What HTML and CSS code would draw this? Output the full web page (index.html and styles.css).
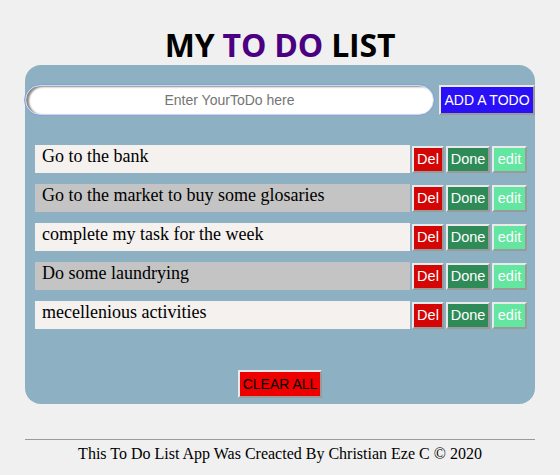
FILE: index.html
```html
<!DOCTYPE html>
<html>
<head>
<meta charset="utf-8">
<link rel="stylesheet" href="styles.css">
</head>
<body>
<h1 class="title">MY <span class="accent">TO DO</span> LIST</h1>
<main class="card">
  <form class="add-row">
    <input class="todo-input" type="text" placeholder="Enter YourToDo here">
    <button class="btn btn-add" type="button">ADD A TODO</button>
  </form>
  <ul class="list">
    <li class="item light"><span class="item-text">Go to the bank</span><button class="btn btn-del">Del</button><button class="btn btn-done">Done</button><button class="btn btn-edit">edit</button></li>
    <li class="item grey"><span class="item-text">Go to the market to buy some glosaries</span><button class="btn btn-del">Del</button><button class="btn btn-done">Done</button><button class="btn btn-edit">edit</button></li>
    <li class="item light"><span class="item-text">complete my task for the week</span><button class="btn btn-del">Del</button><button class="btn btn-done">Done</button><button class="btn btn-edit">edit</button></li>
    <li class="item grey"><span class="item-text">Do some laundrying</span><button class="btn btn-del">Del</button><button class="btn btn-done">Done</button><button class="btn btn-edit">edit</button></li>
    <li class="item light"><span class="item-text">mecellenious activities</span><button class="btn btn-del">Del</button><button class="btn btn-done">Done</button><button class="btn btn-edit">edit</button></li>
  </ul>
  <div class="clear-row"><button class="btn btn-clear">CLEAR ALL</button></div>
</main>
<footer class="footer">
  <hr class="rule">
  <p class="credit">This To Do List App Was Creacted By Christian Eze C © 2020</p>
</footer>
</body>
</html>
```
FILE: styles.css
```css
html, body { margin: 0; padding: 0; }
body {
  background: #f0f0f0;
  font-family: "Liberation Serif", serif;
  width: 560px;
  height: 475px;
  overflow: hidden;
}
.title {
  margin: 24px 0 0;
  height: 41px;
  text-align: center;
  font-family: "Open Sans", "Noto Sans", sans-serif;
  font-weight: 700;
  font-size: 32px;
  line-height: 41px;
  color: #000;
  letter-spacing: -0.2px;
}
.accent { color: #4b0082; }
.card {
  box-sizing: border-box;
  width: 510px;
  height: 339px;
  margin: 0 25px;
  background: #8eb0c3;
  border-radius: 16px;
  padding: 20px 0 0;
}
.add-row {
  display: flex;
  margin: 0;
  gap: 5px;
  height: 30px;
}
.todo-input {
  box-sizing: border-box;
  width: 409px;
  height: 30px;
  margin: 0;
  border: 1px solid #d8d8d8;
  border-radius: 15px;
  background: #fff;
  box-shadow: inset 3px 1px 2px #8a8a8a;
  outline: 1px solid #7fa4e6;
  outline-offset: 0;
  font-family: "Liberation Sans", Arial, sans-serif;
  font-size: 14px;
  text-align: center;
  padding: 0 10px;
}
.todo-input::placeholder { color: #757575; }
.btn {
  box-sizing: border-box;
  margin: 0;
  border: 2px solid #eaeaea;
  border-right-color: #9a9a9a;
  border-bottom-color: #9a9a9a;
  font-family: "Liberation Sans", Arial, sans-serif;
  font-size: 14px;
  padding: 0;
  white-space: nowrap;
  cursor: pointer;
}
.btn-add {
  width: 96px;
  height: 30px;
  background: #2a10f7;
  color: #fff;
  font-size: 14px;
}
.list {
  list-style: none;
  margin: 30px 0 0 10px;
  padding: 0;
  width: 492px;
  display: flex;
  flex-direction: column;
  gap: 11px;
}
.item {
  display: flex;
  align-items: center;
  height: 28px;
}
.item.light .item-text { background: #f4f1ee; }
.item.grey .item-text { background: #c4c4c4; }
.item-text {
  flex: 1;
  height: 28px;
  line-height: 22px;
  padding-left: 7px;
  font-size: 18px;
  color: #000;
  white-space: nowrap;
  overflow: hidden;
}
.item .btn {
  height: 27px;
  color: #fff;
  font-size: 14.5px;
  margin-left: 2px;
}
.btn-del { background: #d40505; width: 32px; }
.btn-done { background: #2e8b57; width: 44px; }
.btn-edit { background: #63e6a0; width: 35px; }
.clear-row {
  display: flex;
  justify-content: center;
  margin-top: 41px;
}
.btn-clear {
  width: 84px;
  height: 28px;
  background: #ee0000;
  color: #000;
  font-size: 14px;
}
.footer { margin: 35px 25px 0; }
.rule {
  border: 0;
  border-top: 1px solid #9a9a9a;
  margin: 0;
}
.credit {
  margin: 5px 0 0;
  text-align: center;
  font-size: 16px;
  color: #000;
}
```
